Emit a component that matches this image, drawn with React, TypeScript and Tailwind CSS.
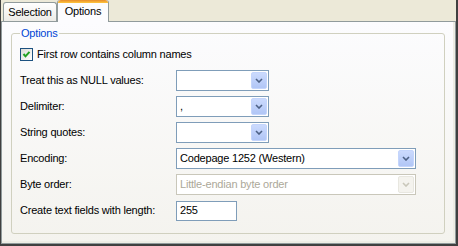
function Chevron({ disabled }: { disabled?: boolean }) {
    return (
        <svg width="8" height="5" viewBox="0 0 8 5">
            <path d="M1 1 L4 4 L7 1" fill="none" stroke={disabled ? "#c9c7ba" : "#4d6185"} strokeWidth="1.6" />
        </svg>
    );
}

function Combo({ className, value, disabled }: { className: string; value?: string; disabled?: boolean }) {
    return (
        <div
            className={`flex h-[21px] items-center border bg-white ${className} ${
                disabled ? "border-[#c9c7ba] text-[#aca899]" : "border-[#7f9db9] text-black"
            }`}
        >
            <span className="flex-1 truncate pl-[3px] leading-none">{value}</span>
            <div
                className={`mr-[1px] flex h-[17px] w-[16px] items-center justify-center rounded-[2px] border ${
                    disabled
                        ? "border-[#e8e7e0] bg-[#f4f3ee]"
                        : "border-[#c4d5fc] bg-gradient-to-b from-[#cbdafd] to-[#b1c6f6]"
                }`}
            >
                <Chevron disabled={disabled} />
            </div>
        </div>
    );
}

function Row({ label, children }: { label: string; children: React.ReactNode }) {
    return (
        <div className="flex h-[21px] items-center">
            <span className="w-[156px] shrink-0">{label}</span>
            {children}
        </div>
    );
}

export default function App() {
    return (
        <div className="flex h-[246px] w-[458px] flex-col border-l border-r-2 border-b-2 border-[#404040] bg-[#ece9d8] font-['Liberation_Sans',Arial,sans-serif] text-[11px] tracking-[-0.2px] text-black">
            {/* Tabs */}
            <div className="relative z-10 flex h-[21px] items-end pl-[2px]">
                <div className="flex h-[19px] w-[54px] items-center justify-center rounded-t-[3px] border border-b-0 border-[#919b9c] bg-gradient-to-b from-white to-[#ecebe6] pt-[1px]">
                    Selection
                </div>
                <div className="-mb-[1px] flex h-[22px] w-[52px] flex-col rounded-t-[3px] border border-b-0 border-[#919b9c] border-t-0 bg-[#fcfcfe]">
                    <div className="h-[3px] rounded-t-[3px] bg-gradient-to-b from-[#e68b2c] to-[#ffc73c]" />
                    <div className="flex flex-1 items-center justify-center pb-[2px]">Options</div>
                </div>
            </div>

            {/* Panel */}
            <div className="flex flex-1 flex-col border border-[#919b9c] bg-gradient-to-b from-[#fcfcfe] to-[#f4f3ee] px-[9px] shadow-[inset_-2px_-2px_0_#eeede5]">
                <fieldset className="mt-[5px] flex h-[207px] w-[434px] flex-col rounded-[3px] border border-[#d0d0bf] px-[8px] pt-[8px]">
                    <legend className="ml-0 px-[1px] leading-[13px] text-[#0046d5]">Options</legend>

                    <div className="flex h-[13px] items-center gap-[4px]">
                        <div className="flex h-[13px] w-[13px] items-center justify-center border border-[#1c5180] bg-gradient-to-br from-[#dcdcd7] to-white">
                            <svg width="9" height="9" viewBox="0 0 9 9">
                                <path d="M1.5 4 L3.5 6.3 L7.5 1.8" fill="none" stroke="#21a121" strokeWidth="2" />
                            </svg>
                        </div>
                        <span>First row contains column names</span>
                    </div>

                    <div className="mt-[9px] flex flex-col gap-[5px]">
                        <Row label="Treat this as NULL values:">
                            <Combo className="w-[93px]" />
                        </Row>
                        <Row label="Delimiter:">
                            <Combo className="w-[93px]" value="," />
                        </Row>
                        <Row label="String quotes:">
                            <Combo className="w-[93px]" />
                        </Row>
                        <Row label="Encoding:">
                            <Combo className="w-[240px]" value="Codepage 1252 (Western)" />
                        </Row>
                        <Row label="Byte order:">
                            <Combo className="w-[240px]" value="Little-endian byte order" disabled />
                        </Row>
                        <Row label="Create text fields with length:">
                            <div className="flex h-[20px] w-[61px] items-center border border-[#7f9db9] bg-white pl-[3px]">
                                255
                            </div>
                        </Row>
                    </div>
                </fieldset>
            </div>
        </div>
    );
}
